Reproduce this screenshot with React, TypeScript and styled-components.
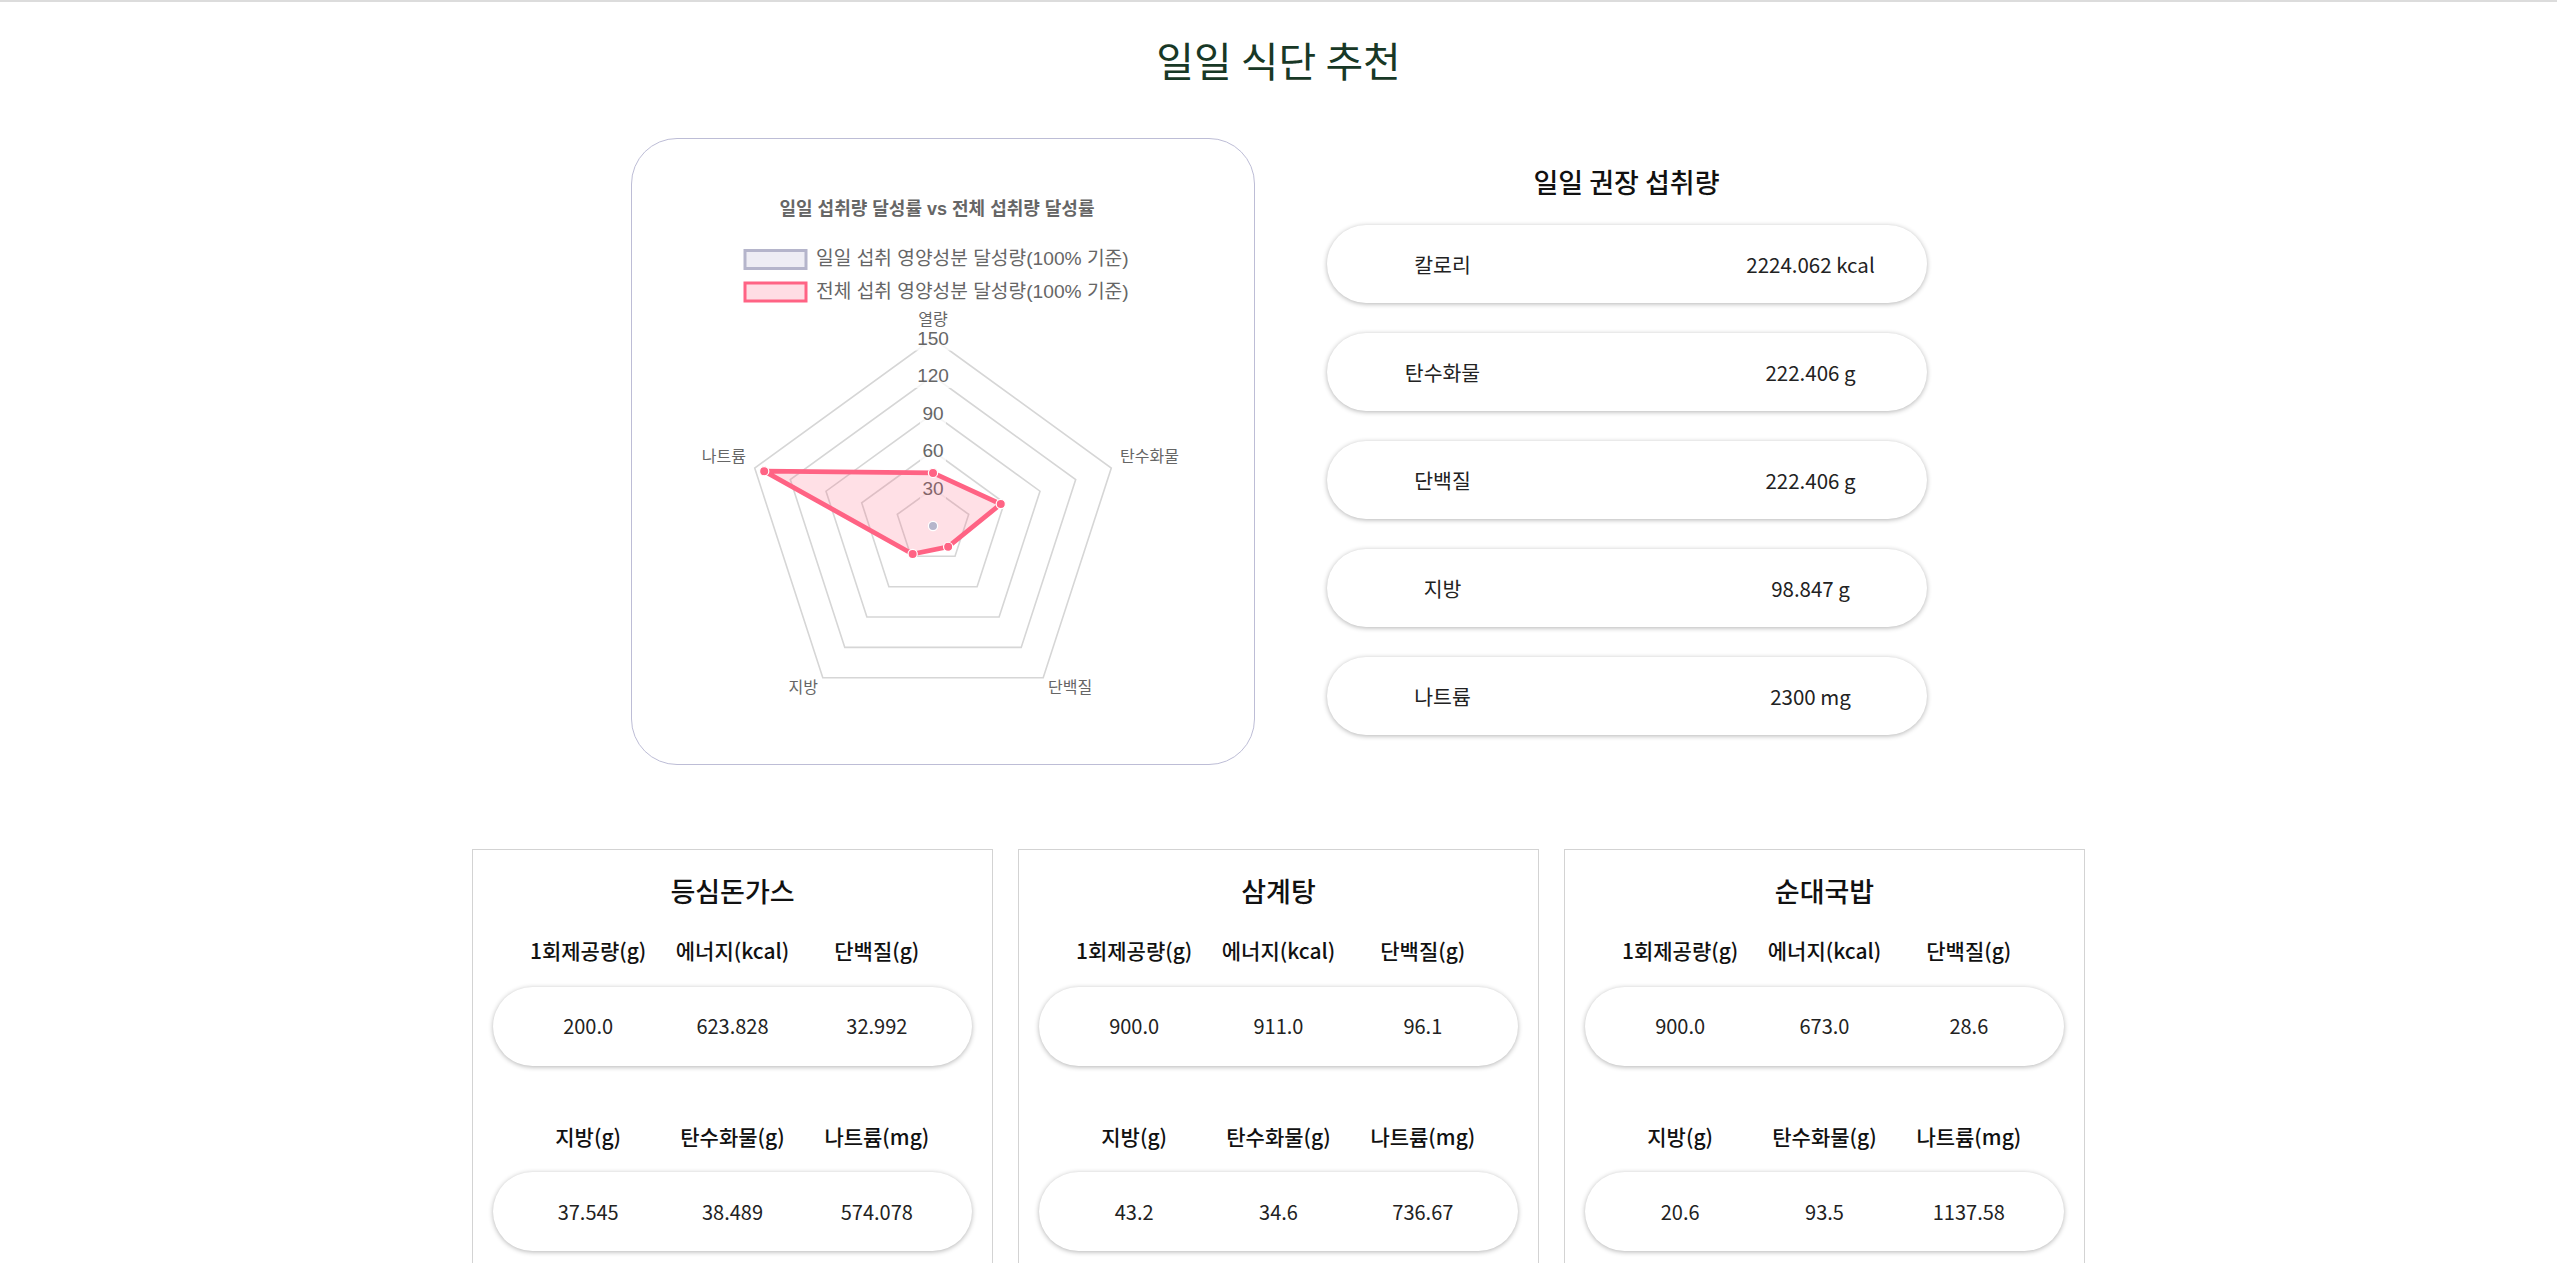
import styled, { createGlobalStyle } from 'styled-components'

const GlobalStyle = createGlobalStyle`
	* {
		box-sizing: border-box;
	}
	body {
		margin: 0;
		background: #fff;
		font-family: 'Noto Sans CJK KR', 'Noto Sans', sans-serif;
		color: #222;
	}
`

const Page = styled.div`
	border-top: 2px solid #dcdcdc;
	min-height: 100vh;
`

const Title = styled.h1`
	margin: 34px 0 0;
	text-align: center;
	font-size: 41px;
	line-height: 46px;
	font-weight: 400;
	color: #183826;
`

const TopSection = styled.section`
	display: flex;
	justify-content: center;
	align-items: flex-start;
	gap: 72px;
	margin-top: 56px;
`

const ChartCard = styled.div`
	width: 624px;
	height: 627px;
	border: 1px solid #bdbdd6;
	border-radius: 46px;
	overflow: hidden;
	& > svg {
		display: block;
	}
`

const RightColumn = styled.div`
	width: 600px;
	display: flex;
	flex-direction: column;
`

const PanelHeading = styled.h2`
	margin: 26px 0 26px;
	text-align: center;
	font-size: 27px;
	line-height: 35px;
	font-weight: 500;
	color: #111;
`

const IntakeList = styled.div`
	display: flex;
	flex-direction: column;
	gap: 30px;
`

const IntakePill = styled.div`
	height: 78px;
	border-radius: 39px;
	background: #fff;
	box-shadow: 0 1px 5px rgba(0, 0, 0, 0.3);
	display: flex;
	align-items: center;
	justify-content: space-between;
	padding: 0 36px;
	font-size: 20.5px;
	color: #222;
`

const PillCell = styled.span`
	width: 160px;
	text-align: center;
`

const MenuSection = styled.section`
	display: flex;
	justify-content: center;
	gap: 25px;
	margin-top: 84px;
`

const MenuCard = styled.article`
	width: 521px;
	border: 1px solid #d3d3d3;
	padding: 22.5px 20px 40px;
`

const MenuName = styled.h3`
	margin: 0;
	text-align: center;
	font-size: 27px;
	line-height: 35px;
	font-weight: 500;
	color: #111;
`

const NutrientBlock = styled.div`
	margin-top: 27.5px;
	& + & {
		margin-top: 55px;
	}
`

const ColumnRow = styled.div`
	display: grid;
	grid-template-columns: repeat(3, 1fr);
	padding: 0 23px;
	text-align: center;
	font-size: 20px;
	line-height: 30px;
`

const HeadRow = styled(ColumnRow)`
	font-size: 21px;
	font-weight: 500;
	color: #111;
`

const ValuePill = styled(ColumnRow)`
	margin-top: 21.7px;
	height: 79px;
	align-items: center;
	border-radius: 40px;
	background: #fff;
	box-shadow: 0 1px 5px rgba(0, 0, 0, 0.3);
	color: #222;
`

const intake = [
	{ label: '칼로리', value: '2224.062 kcal' },
	{ label: '탄수화물', value: '222.406 g' },
	{ label: '단백질', value: '222.406 g' },
	{ label: '지방', value: '98.847 g' },
	{ label: '나트륨', value: '2300 mg' },
]

const menus = [
	{ name: '등심돈가스', first: ['200.0', '623.828', '32.992'], second: ['37.545', '38.489', '574.078'] },
	{ name: '삼계탕', first: ['900.0', '911.0', '96.1'], second: ['43.2', '34.6', '736.67'] },
	{ name: '순대국밥', first: ['900.0', '673.0', '28.6'], second: ['20.6', '93.5', '1137.58'] },
]

const firstHeads = ['1회제공량(g)', '에너지(kcal)', '단백질(g)']
const secondHeads = ['지방(g)', '탄수화물(g)', '나트륨(mg)']

// radar chart
const CX = 301
const CY = 387
const R = 187.5
const MAX = 150
const totalValues = [42.5, 57, 20.6, 27.7, 142]

const pt = (i: number, r: number) => {
	const a = ((-90 + 72 * i) * Math.PI) / 180
	return [CX + r * Math.cos(a), CY + r * Math.sin(a)]
}

const ring = (r: number) =>
	[0, 1, 2, 3, 4].map((i) => pt(i, r).map((n) => n.toFixed(1)).join(',')).join(' ')

const chartFont = "'Liberation Sans', 'Noto Sans CJK KR', sans-serif"

const pointLabels = [
	{ text: '열량', x: 301, y: 182, anchor: 'middle' },
	{ text: '탄수화물', x: 488, y: 319, anchor: 'start' },
	{ text: '단백질', x: 416, y: 550, anchor: 'start' },
	{ text: '지방', x: 186, y: 550, anchor: 'end' },
	{ text: '나트륨', x: 114, y: 319, anchor: 'end' },
]

const RadarChart = () => {
	const dataPts = totalValues.map((v, i) => pt(i, (R * v) / MAX))
	return (
		<svg width="622" height="625" viewBox="0 0 622 625">
			<text x="305" y="71" textAnchor="middle" dominantBaseline="middle" fontFamily={chartFont} fontSize="18" fontWeight="700" fill="#666">
				일일 섭취량 달성률 vs 전체 섭취량 달성률
			</text>
			<rect x="113" y="111.5" width="61" height="18" fill="#eeedf4" stroke="#b5b5cb" strokeWidth="3" />
			<text x="184" y="121" dominantBaseline="middle" fontFamily={chartFont} fontSize="19.2" fill="#666">
				일일 섭취 영양성분 달성량(100% 기준)
			</text>
			<rect x="113" y="144" width="61" height="18" fill="#ffdde4" stroke="#ff6384" strokeWidth="3" />
			<text x="184" y="153.5" dominantBaseline="middle" fontFamily={chartFont} fontSize="19.2" fill="#666">
				전체 섭취 영양성분 달성량(100% 기준)
			</text>

			{[1, 2, 3, 4, 5].map((k) => (
				<polygon key={k} points={ring((R * k) / 5)} fill="none" stroke="#d6d6d6" strokeWidth="1.6" />
			))}
			{[1, 2, 3, 4, 5].map((k) => {
				const y = CY - (R * k) / 5
				const w = k >= 4 ? 38 : 26
				return (
					<g key={k}>
						<rect x={CX - w / 2} y={y - 12} width={w} height={24} fill="#fff" fillOpacity="0.75" />
						<text x={CX} y={y + 1} textAnchor="middle" dominantBaseline="middle" fontFamily={chartFont} fontSize="19" fill="#666">
							{k * 30}
						</text>
					</g>
				)
			})}
			{pointLabels.map((l) => (
				<text key={l.text} x={l.x} y={l.y} textAnchor={l.anchor as 'start'} dominantBaseline="middle" fontFamily={chartFont} fontSize="16" fill="#666">
					{l.text}
				</text>
			))}

			<polygon
				points={dataPts.map((p) => p.map((n) => n.toFixed(1)).join(',')).join(' ')}
				fill="rgba(255, 99, 132, 0.2)"
				stroke="#ff6384"
				strokeWidth="4.8"
				strokeLinejoin="miter"
			/>
			{dataPts.map((p, i) => (
				<circle key={i} cx={p[0]} cy={p[1]} r="4.6" fill="#ff6384" stroke="#fff" strokeWidth="1.2" />
			))}
			<circle cx={CX} cy={CY} r="4.6" fill="#b5b5cb" stroke="#fff" strokeWidth="1.2" />
		</svg>
	)
}

const App = () => {
	return (
		<Page>
			<GlobalStyle />
			<Title>일일 식단 추천</Title>
			<TopSection>
				<ChartCard>
					<RadarChart />
				</ChartCard>
				<RightColumn>
					<PanelHeading>일일 권장 섭취량</PanelHeading>
					<IntakeList>
						{intake.map(({ label, value }) => (
							<IntakePill key={label}>
								<PillCell>{label}</PillCell>
								<PillCell>{value}</PillCell>
							</IntakePill>
						))}
					</IntakeList>
				</RightColumn>
			</TopSection>
			<MenuSection>
				{menus.map((m) => (
					<MenuCard key={m.name}>
						<MenuName>{m.name}</MenuName>
						<NutrientBlock>
							<HeadRow>
								{firstHeads.map((h) => (
									<span key={h}>{h}</span>
								))}
							</HeadRow>
							<ValuePill>
								{m.first.map((v, i) => (
									<span key={i}>{v}</span>
								))}
							</ValuePill>
						</NutrientBlock>
						<NutrientBlock>
							<HeadRow>
								{secondHeads.map((h) => (
									<span key={h}>{h}</span>
								))}
							</HeadRow>
							<ValuePill>
								{m.second.map((v, i) => (
									<span key={i}>{v}</span>
								))}
							</ValuePill>
						</NutrientBlock>
					</MenuCard>
				))}
			</MenuSection>
		</Page>
	)
}

export default App
